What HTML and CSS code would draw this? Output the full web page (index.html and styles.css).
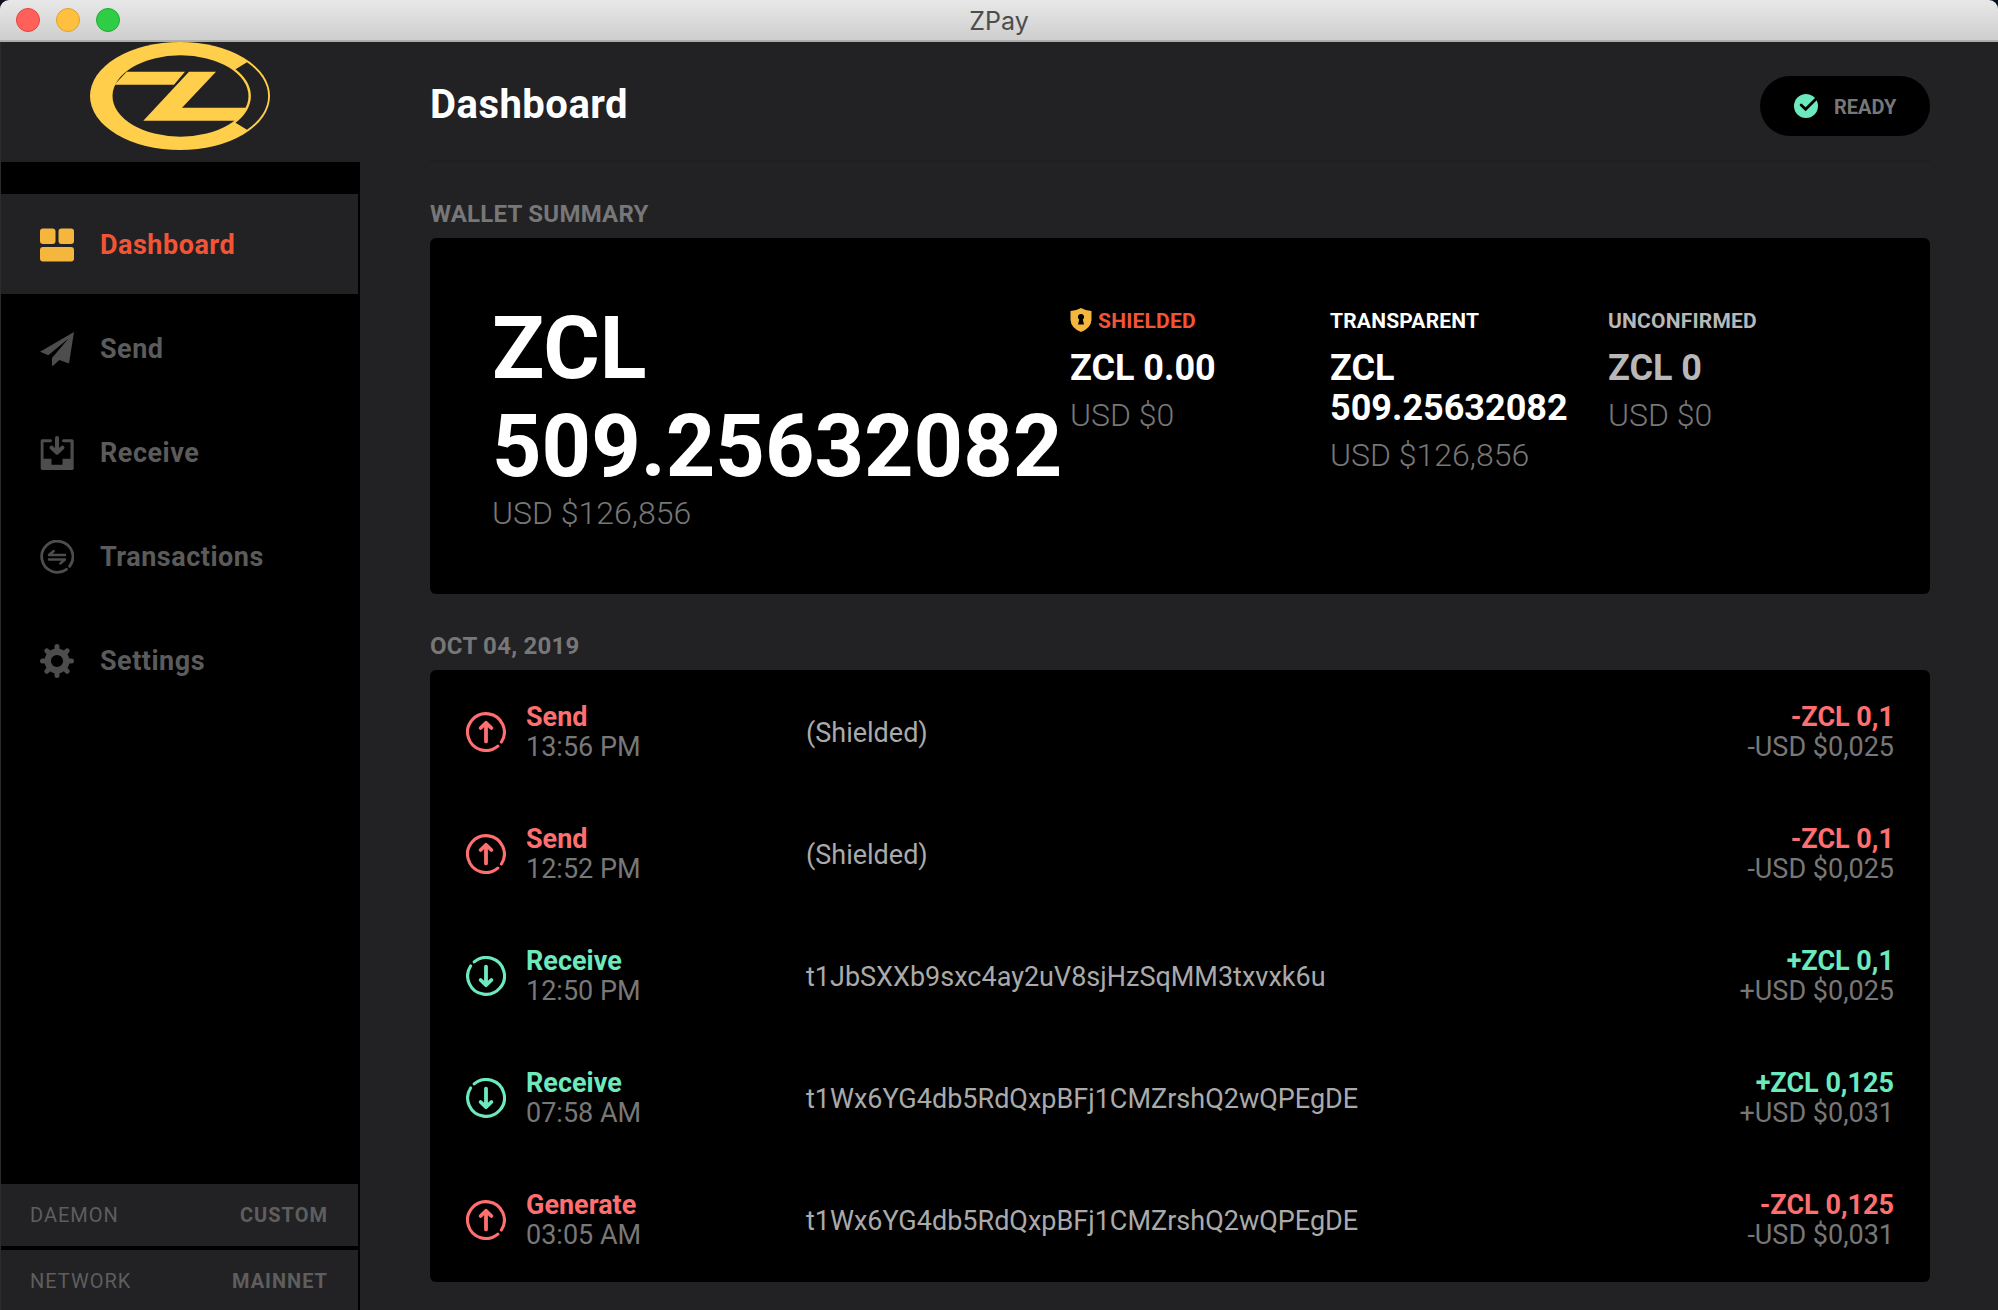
FILE: index.html
```html
<!DOCTYPE html>
<html lang="en">
<head>
<meta charset="utf-8">
<title>ZPay</title>
<link rel="stylesheet" href="styles.css">
</head>
<body>
<svg class="defs" width="0" height="0">
  <symbol id="up" viewBox="0 0 40 40"><path d="M31.8 34.1A18.400 18.400 0 1 1 35.400 30"/><path stroke-width="3.8" d="M20 29.400V11M14.600 16L20 10.800L25.400 16"/></symbol>
  <symbol id="down" viewBox="0 0 40 40"><path d="M8.200 5.900A18.400 18.400 0 1 1 4.600 10"/><path stroke-width="3.8" d="M20 10.600V29M14.600 24L20 29.200L25.400 24"/></symbol>
</svg>
<div class="window">
  <header class="titlebar">
    <div class="lights"><i class="close"></i><i class="minimize"></i><i class="maximize"></i></div>
    <span class="app-name">ZPay</span>
  </header>
  <div class="body">
    <aside class="sidebar">
      <div class="brand">
        <svg width="180" height="108" viewBox="0 0 180 108">
          <ellipse cx="90" cy="54" rx="90" ry="54" fill="#ffcf4b"/>
          <ellipse cx="90.5" cy="54" rx="68" ry="40.7" fill="#222224"/>
          <path fill="#222224" d="M157 20.2A88 52 0 0 1 157 87.800L145.500 80.800A70.500 43 0 0 0 145.500 27.200Z"/>
          <path fill="#ffcf4b" d="M36.7 29.7H95L84 42.7H24.5ZM99 29.7H126L92 65.7H156.9Q153 73 145 78.7H53.3Z"/>
        </svg>
      </div>
      <nav class="menu">
        <a class="item active"><svg width="34" height="34" viewBox="0 0 34 34"><rect y=".5" width="15.5" height="15.5" rx="3"/><rect x="18.5" y=".5" width="15.5" height="15.5" rx="3"/><rect y="19" width="34" height="14.5" rx="3"/></svg><span>Dashboard</span></a>
        <a class="item"><svg width="34" height="34" viewBox="0 0 34 34"><path d="M34 0L29 31.5L19.3 28L12.8 34L12 33.5V26L28.5 6.5L8.3 23.3L0 19.7Z"/></svg><span>Send</span></a>
        <a class="item"><svg width="34" height="34" viewBox="0 0 34 34"><path d="M2 3.2H10.5Q12 3.4 12 4.7Q12 6 10.5 6.2H3.5V22.8H11.5V28.8H22.5V22.8H30.5V6.2H23.5Q22 6 22 4.7Q22 3.4 23.5 3.2H32Q33.7 3.2 33.7 5V32.5Q33.7 34 32 34H2.3Q.7 34 .7 32.3V5Q.7 3.2 2 3.2Z"/><path class="line" stroke-width="4" d="M17 2V16M11.5 11.5L17 16.7L22.5 11.5"/></svg><span>Receive</span></a>
        <a class="item"><svg width="34" height="34" viewBox="0 0 34 34"><path class="line" stroke-width="2.8" d="M26.5 29.3A15.6 15.6 0 1 1 29.6 26.3"/><path class="line" stroke-width="2.4" d="M25 15H9L13.7 11M9 19.5H25L20.3 23.5"/></svg><span>Transactions</span></a>
        <a class="item"><svg width="34" height="34" viewBox="0 0 34 34"><circle class="line" cx="17" cy="17" r="9.3" stroke-width="6.4"/><path class="line" stroke-width="5" d="M17 2.5V6M17 31.5V28M2.5 17H6M31.5 17H28M6.8 6.8L9 9M27.2 27.2L25 25M27.2 6.8L25 9M6.8 27.2L9 25"/></svg><span>Settings</span></a>
      </nav>
      <div class="info"><span>DAEMON</span><b>CUSTOM</b></div>
      <div class="info"><span>NETWORK</span><b>MAINNET</b></div>
    </aside>
    <main class="main">
      <div class="head">
        <h1>Dashboard</h1>
        <div class="status"><svg width="24" height="24" viewBox="0 0 24 24"><circle cx="12" cy="12" r="12" fill="#6ceabe"/><path d="M7.2 11L11.6 15.2L23 4" fill="none" stroke="#000" stroke-width="2.8" stroke-linecap="round"/></svg><span>READY</span></div>
      </div>
      <h2>WALLET SUMMARY</h2>
      <section class="card summary">
        <div class="total"><strong>ZCL 509.25632082</strong><small>USD $126,856</small></div>
        <div class="balance shielded"><h3><svg width="22" height="24" viewBox="0 0 22 24"><path fill="#f4b63c" d="M11 0Q15.500 2.600 21.500 3V12Q21 20 11 24Q1 20 .5 12V3Q6.500 2.600 11 0Z"/><path d="M11 6A3 3 0 0 1 12.800 11.500L14 16.500H8L9.200 11.500A3 3 0 0 1 11 6Z"/></svg>SHIELDED</h3><strong>ZCL 0.00</strong><small>USD $0</small></div>
        <div class="balance"><h3>TRANSPARENT</h3><strong>ZCL 509.25632082</strong><small>USD $126,856</small></div>
        <div class="balance pending"><h3>UNCONFIRMED</h3><strong>ZCL 0</strong><small>USD $0</small></div>
      </section>
      <h2>OCT 04, 2019</h2>
      <section class="card list">
        <div class="row out"><svg width="40" height="40"><use href="#up"/></svg><div class="kind"><b>Send</b><span>13:56 PM</span></div><p>(Shielded)</p><div class="amount"><b>-ZCL 0,1</b><span>-USD $0,025</span></div></div>
        <div class="row out"><svg width="40" height="40"><use href="#up"/></svg><div class="kind"><b>Send</b><span>12:52 PM</span></div><p>(Shielded)</p><div class="amount"><b>-ZCL 0,1</b><span>-USD $0,025</span></div></div>
        <div class="row in"><svg width="40" height="40"><use href="#down"/></svg><div class="kind"><b>Receive</b><span>12:50 PM</span></div><p>t1JbSXXb9sxc4ay2uV8sjHzSqMM3txvxk6u</p><div class="amount"><b>+ZCL 0,1</b><span>+USD $0,025</span></div></div>
        <div class="row in"><svg width="40" height="40"><use href="#down"/></svg><div class="kind"><b>Receive</b><span>07:58 AM</span></div><p>t1Wx6YG4db5RdQxpBFj1CMZrshQ2wQPEgDE</p><div class="amount"><b>+ZCL 0,125</b><span>+USD $0,031</span></div></div>
        <div class="row out"><svg width="40" height="40"><use href="#up"/></svg><div class="kind"><b>Generate</b><span>03:05 AM</span></div><p>t1Wx6YG4db5RdQxpBFj1CMZrshQ2wQPEgDE</p><div class="amount"><b>-ZCL 0,125</b><span>-USD $0,031</span></div></div>
      </section>
    </main>
  </div>
</div>
</body>
</html>
```
FILE: styles.css
```css
* { box-sizing: border-box; }
body { margin: 0; background: #0b1020; font-family: Roboto, "Liberation Sans", sans-serif; }
h1, h2, h3, p { margin: 0; }
.defs { display: block; }
.window { width: 1998px; height: 1310px; display: flex; flex-direction: column; overflow: hidden; border-radius: 9px 9px 0 0; background: #222224; }
.titlebar { height: 42px; flex: none; display: grid; grid-template-columns: 1fr auto 1fr; align-items: center; padding: 0 16px; background: linear-gradient(#e8e8e8, #cecece); border-bottom: 2px solid #adadad; }
.lights { display: flex; gap: 16px; }
.lights i { width: 24px; height: 24px; border-radius: 50%; border: 1px solid transparent; }
.lights .close { background: #ff615a; border-color: #e2453f; }
.lights .minimize { background: #ffc040; border-color: #e0a02f; }
.lights .maximize { background: #2fcc46; border-color: #1fac31; }
.app-name { font: 25px/38px Inter, sans-serif; color: #4c4c4c; padding-top: 2px; }
.body { flex: 1; display: flex; min-height: 0; }

.sidebar { width: 360px; flex: none; display: flex; flex-direction: column; background: #000; border-left: 1px solid #2b2b2c; }
.brand { height: 120px; flex: none; padding-left: 89px; background: #222224; }
.brand svg { display: block; }
.menu { flex: 1; padding-top: 32px; display: flex; flex-direction: column; gap: 4px; }
.item { height: 100px; margin-right: 2px; padding: 2px 0 0 39px; display: flex; align-items: center; gap: 26px; color: #5b5b5b; fill: #4d4d4d; stroke: none; font-size: 27px; font-weight: 700; letter-spacing: .5px; }
.item .line { fill: none; stroke: #4d4d4d; stroke-linecap: round; stroke-linejoin: round; }
.item.active { background: #222224; color: #f45436; fill: #f4b63c; }
.info { height: 62px; flex: none; margin: 0 2px 4px 0; padding: 0 30px 0 29px; display: flex; justify-content: space-between; align-items: center; background: #222224; color: #5e5e5e; font-size: 20px; letter-spacing: 1px; }
.info:last-child { height: 60px; margin-bottom: 0; padding-top: 2px; }

.main { flex: 1; padding: 0 68px 0 70px; }
.head { height: 120px; display: flex; justify-content: space-between; align-items: flex-start; border-bottom: 2px solid #1f1f21; }
h1 { color: #fff; font-size: 40px; line-height: 46px; padding-top: 40px; letter-spacing: .5px; }
.status { width: 170px; height: 60px; margin-top: 34px; padding-left: 34px; display: flex; align-items: center; gap: 16px; border-radius: 30px; background: #000; color: #777; font-size: 20px; font-weight: 700; }
.status span { padding-top: 2px; }
h2 { height: 76px; padding-top: 37px; color: #777; font-size: 24px; line-height: 30px; letter-spacing: .25px; }
.card { background: #000; border-radius: 6px; }
.summary { height: 356px; padding: 0 62px; display: grid; grid-template-columns: 578px 260px 278px 1fr; }
.summary strong, .summary small { display: block; }
.summary small { color: #777; font-size: 32px; line-height: 38px; font-weight: 300; }
.total { padding-top: 62px; }
.total strong { color: #fff; font-size: 86.4px; line-height: 98px; }
.total small { margin-top: -2px; }
.balance { padding-top: 68px; color: #fff; }
h3 { height: 30px; display: flex; align-items: center; gap: 6px; font-size: 21px; letter-spacing: .2px; }
.shielded h3 { color: #f45436; }
.shielded svg { margin-bottom: 2px; }
.balance strong { width: 240px; font-size: 36px; line-height: 40px; padding-top: 12px; }
.balance small { padding-top: 8px; }
.pending { color: #b8b8b8; }
.list { padding: 1px 0; }
.row { height: 122px; padding: 0 36px; display: grid; grid-template-columns: 40px 260px 1fr auto; column-gap: 20px; align-items: center; font-size: 27px; line-height: 30px; color: #777; }
.row > svg { fill: none; stroke: currentColor; stroke-width: 3.1; stroke-linecap: round; stroke-linejoin: round; }
.out > svg, .out b { color: #ff6f6f; }
.in > svg, .in b { color: #6ceabe; }
.row p { color: #aaa; padding-top: 2px; }
.kind, .amount { display: flex; flex-direction: column; }
.amount { text-align: right; }
```
